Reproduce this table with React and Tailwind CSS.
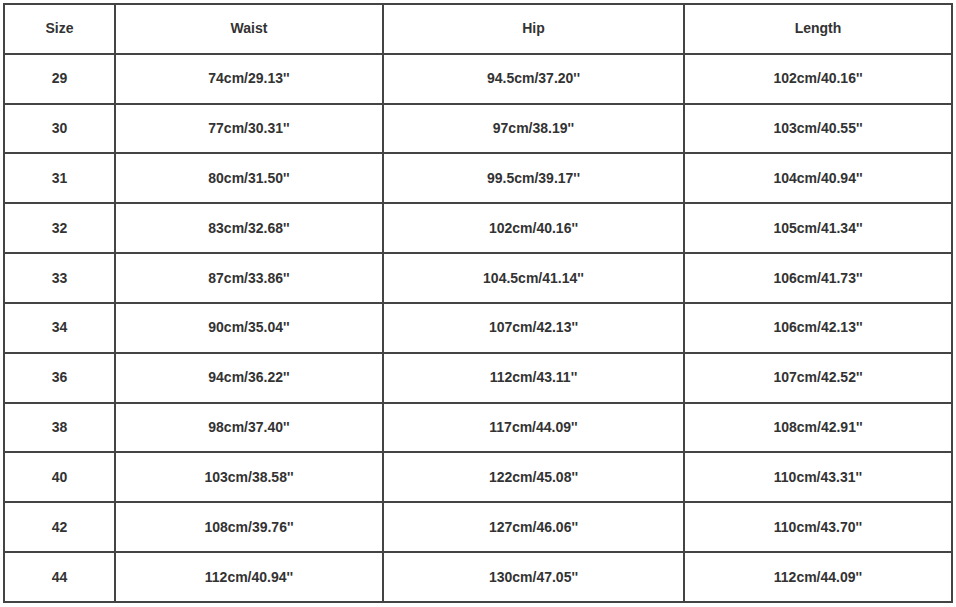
import React from "react";

const rows = [
  ["Size", "Waist", "Hip", "Length"],
  ["29", "74cm/29.13''", "94.5cm/37.20''", "102cm/40.16''"],
  ["30", "77cm/30.31''", "97cm/38.19''", "103cm/40.55''"],
  ["31", "80cm/31.50''", "99.5cm/39.17''", "104cm/40.94''"],
  ["32", "83cm/32.68''", "102cm/40.16''", "105cm/41.34''"],
  ["33", "87cm/33.86''", "104.5cm/41.14''", "106cm/41.73''"],
  ["34", "90cm/35.04''", "107cm/42.13''", "106cm/42.13''"],
  ["36", "94cm/36.22''", "112cm/43.11''", "107cm/42.52''"],
  ["38", "98cm/37.40''", "117cm/44.09''", "108cm/42.91''"],
  ["40", "103cm/38.58''", "122cm/45.08''", "110cm/43.31''"],
  ["42", "108cm/39.76''", "127cm/46.06''", "110cm/43.70''"],
  ["44", "112cm/40.94''", "130cm/47.05''", "112cm/44.09''"],
];

export default function App() {
  return (
    <div className="w-[956px] h-[607px] bg-white pl-[3px] pt-[3px]">
      <div
        className="grid w-[950px] h-[600px] bg-[#444444] p-[2px] gap-[2px] grid-cols-[109px_266px_299px_266px] grid-rows-[repeat(12,1fr)]"
        style={{ fontFamily: '"Liberation Sans", Arial, sans-serif' }}
      >
        {rows.flatMap((r, i) =>
          r.map((c, j) => (
            <div
              key={i + "-" + j}
              className="bg-white flex items-center justify-center text-[14px] font-bold text-[#333333]"
            >
              {c}
            </div>
          ))
        )}
      </div>
    </div>
  );
}
